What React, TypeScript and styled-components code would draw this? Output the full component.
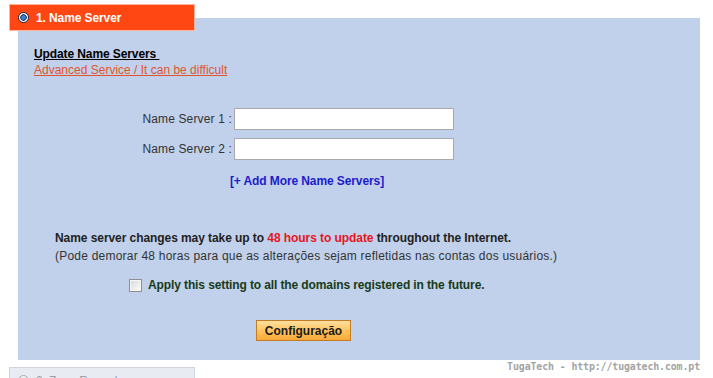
import { FC } from "react";
import styled, { createGlobalStyle } from "styled-components";

const GlobalStyle = createGlobalStyle`
  html, body {
    margin: 0;
    padding: 0;
    background: #ffffff;
    font-family: "Liberation Sans", Arial, sans-serif;
    font-size: 12px;
  }
`;

const Page = styled.div`
  width: 713px;
  height: 378px;
  overflow: hidden;
  padding-top: 4px;
  box-sizing: border-box;
`;

const Tab = styled.div<{ $active?: boolean }>`
  position: relative;
  z-index: 1;
  display: flex;
  align-items: center;
  gap: 7px;
  box-sizing: border-box;
  width: 186px;
  height: 27px;
  margin-left: 9px;
  padding-left: 8px;
  border: 1px solid ${(p) => (p.$active ? "#ffb49c" : "#cfd3da")};
  background: ${(p) => (p.$active ? "#ff4713" : "#e8ebf2")};
  color: ${(p) => (p.$active ? "#ffffff" : "#9a9ea6")};
  font-weight: bold;
  font-size: 12px;
  letter-spacing: -0.1px;
  margin-bottom: ${(p) => (p.$active ? "-13px" : "0")};
`;

const Radio = styled.span<{ $active?: boolean }>`
  display: inline-block;
  box-sizing: border-box;
  width: 11px;
  height: 11px;
  border-radius: 50%;
  border: 1px solid ${(p) => (p.$active ? "#1a2a4a" : "#a8acb4")};
  background: ${(p) =>
    p.$active
      ? "radial-gradient(circle at 50% 50%, #3a7fd0 0 2px, #1c3a66 2.5px 3px, #ffffff 3.5px)"
      : "radial-gradient(circle at 50% 40%, #ffffff, #d8dbe0)"};
`;

const Panel = styled.div`
  box-sizing: border-box;
  width: 682px;
  height: 342px;
  margin-left: 18px;
  padding-top: 28px;
  background: #c1d1eb;
`;

const Title = styled.div`
  padding-left: 16px;
  line-height: 16px;
  font-weight: bold;
  color: #000000;
  text-decoration: underline;
  white-space: pre;
  letter-spacing: -0.1px;
`;

const WarnLink = styled.a`
  display: block;
  padding-left: 16px;
  line-height: 16px;
  color: #e0552c;
  text-decoration: underline;
`;

const Form = styled.div`
  display: grid;
  grid-template-columns: 214px 220px;
  column-gap: 2px;
  row-gap: 8px;
  margin-top: 30px;
  align-items: center;
`;

const Label = styled.label`
  text-align: right;
  color: #333333;
  letter-spacing: 0.15px;
`;

const TextInput = styled.input`
  box-sizing: border-box;
  width: 220px;
  height: 22px;
  margin: 0;
  border: 1px solid #a9a9a9;
  background: #ffffff;
  font-family: inherit;
`;

const AddMore = styled.a`
  display: block;
  margin-top: 14px;
  padding-right: 104px;
  text-align: center;
  line-height: 14px;
  font-weight: bold;
  color: #1c1ccc;
  text-decoration: none;
  letter-spacing: -0.1px;
`;

const Note = styled.div`
  margin-top: 41px;
  padding-left: 37px;
  line-height: 18px;
`;

const NoteStrong = styled.div`
  font-weight: bold;
  color: #222222;
  letter-spacing: -0.07px;
`;

const Hot = styled.span`
  color: #e8141e;
`;

const NoteSub = styled.div`
  color: #333333;
  letter-spacing: 0.22px;
`;

const CheckRow = styled.label`
  display: flex;
  align-items: center;
  gap: 6px;
  margin-top: 13px;
  padding-left: 111px;
  line-height: 14px;
  font-weight: bold;
  color: #173a17;
  letter-spacing: -0.11px;
`;

const Check = styled.span`
  box-sizing: border-box;
  width: 13px;
  height: 13px;
  border: 1px solid #8e8f8f;
  background: linear-gradient(135deg, #d6d6d6, #ffffff);
  box-shadow: inset 0 0 0 1px #f4f4f4;
`;

const ButtonRow = styled.div`
  display: flex;
  margin-top: 28px;
  padding-left: 238px;
`;

const Button = styled.button`
  box-sizing: border-box;
  width: 95px;
  height: 21px;
  padding: 0;
  border: 1px solid #c57a24;
  background: linear-gradient(#ffe0a0, #ffc25a 55%, #f7a93a);
  color: #1a1a1a;
  font-family: inherit;
  font-size: 12px;
  font-weight: bold;
`;

const Footer = styled.div`
  display: flex;
  justify-content: space-between;
  align-items: flex-start;
  width: 700px;
`;

const Watermark = styled.div`
  margin-top: 1px;
  font-family: "DejaVu Sans Mono", monospace;
  font-size: 9.9px;
  font-weight: bold;
  color: #a3a3a3;
  letter-spacing: -0.1px;
`;

const NextTab = styled(Tab)`
  margin-top: 7px;
  font-weight: normal;
`;

const App: FC = () => {
  return (
    <>
      <GlobalStyle />
      <Page>
        <Tab $active>
          <Radio $active />
          1. Name Server
        </Tab>
        <Panel>
          <Title>Update Name Servers </Title>
          <WarnLink href="#">Advanced Service / It can be difficult</WarnLink>
          <Form>
            <Label>Name Server 1 :</Label>
            <TextInput />
            <Label>Name Server 2 :</Label>
            <TextInput />
          </Form>
          <AddMore href="#">[+ Add More Name Servers]</AddMore>
          <Note>
            <NoteStrong>
              Name server changes may take up to <Hot>48 hours to update</Hot>{" "}
              throughout the Internet.
            </NoteStrong>
            <NoteSub>
              (Pode demorar 48 horas para que as alterações sejam refletidas
              nas contas dos usuários.)
            </NoteSub>
          </Note>
          <CheckRow>
            <Check />
            Apply this setting to all the domains registered in the future.
          </CheckRow>
          <ButtonRow>
            <Button>Configuração</Button>
          </ButtonRow>
        </Panel>
        <Footer>
          <NextTab>
            <Radio />
            2. Zone Records
          </NextTab>
          <Watermark>TugaTech - http://tugatech.com.pt</Watermark>
        </Footer>
      </Page>
    </>
  );
};

export default App;
